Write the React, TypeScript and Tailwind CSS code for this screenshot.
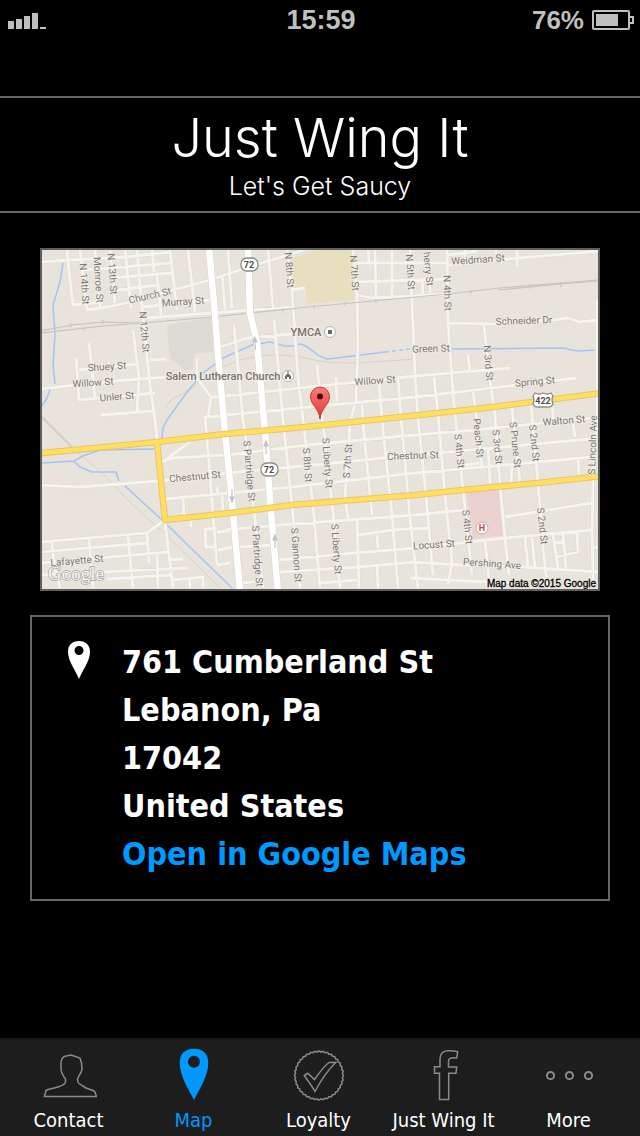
import type { ReactNode } from 'react';

type Label = [text: string, x: number, y: number, angle: number];

const ADDRESS = ['761 Cumberland St', 'Lebanon, Pa', '17042', 'United States'];

const MINOR_ROADS = [
  // north west
  'M40 262L70 260L127 257L170 252', 'M67 250L68 262L73 305L103 302', 'M87 310L107 307L130 302L173 290L210 280L245 268L265 262L305 250',
  'M80 250L87 310', 'M95 250L100 307', 'M110 250L115 303', 'M125 250L131 308', 'M137 250L142 308L150 385L155 420L157 440',
  'M152 250L154 272', 'M157 275L161 315', 'M170 250L177 310', 'M188 250L195 312', 'M83 270L173 263', 'M110 278L172 273',
  'M117 290L157 285', 'M142 307L212 300', 'M147 318L212 313L292 307', 'M222 275L225 310', 'M220 347L248 338L292 334',
  'M133 330L139 378L137 412', 'M89 343L95 398', 'M76 358L79 400L155 393', 'M79 370L137 364', 'M40 389L113 381L168 377',
  'M101 415L153 411', 'M150 360L166 359', 'M197 358L197 378L211 397L208 417', 'M211 397L222 397',
  'M220 416L205 417L210 475L213 515L217 565', 'M108 362L109 370',
  // north middle
  'M228 250L232 308', 'M268 250L273 308', 'M287 250L292 290L298 378L303 420L313 505L320 588', 'M292 290L305 288',
  'M353 250L357 295L358 345L356 400L350 423L345 498L348 518', 'M357 295L372 298L415 296L448 294', 'M368 250L369 262',
  'M375 250L376 297', 'M392 250L392 297', 'M353 263L448 263', 'M358 282L445 279', 'M410 250L412 302L415 375L418 418L426 495L433 575',
  'M234 325L243 420L245 432L263 588', 'M274 320L283 420L292 505L300 588', 'M317 365L323 425L332 502L340 588', 'M336 377L337 402',
  'M225 396L415 376L510 368', 'M225 415L415 397L576 378', 'M379 382L382 420L392 515L398 588', 'M398 378L401 418L410 518L418 588',
  'M362 405L363 423L372 515',
  // north east
  'M447 250L448 323L453 395L463 490L472 575', 'M422 278L423 294', 'M430 278L430 294', 'M448 265L520 258L598 251', 'M517 250L517 267',
  'M448 255L477 251', 'M465 250L465 260', 'M496 250L496 254', 'M448 323L493 324L553 320L567 318L580 322L598 320',
  'M484 325L491 388L495 415L500 485L505 538L509 575', 'M468 355L470 372', 'M434 377L438 415L445 495L452 562L448 585',
  'M473 392L477 420L482 467', 'M512 408L520 482', 'M531 405L538 482L543 548L547 585', 'M552 405L554 425', 'M597 300L597 420L593 478L592 532L593 582',
  'M573 422L575 437', 'M578 458L579 475',
  // between the two highways
  'M40 485L80 487L158 481L227 473L292 467L415 455L590 439', 'M162 462L190 442', 'M162 462L173 458L227 455L307 445L415 435L475 430L590 418',
  'M165 499L230 493L292 487L415 473L527 463L592 457', 'M183 498L184 515', 'M217 487L218 494', 'M222 493L223 512', 'M191 520L191 527',
  'M488 448L490 483', 'M512 465L511 483', 'M465 465L480 463',
  // south west
  'M165 520L147 533L40 542', 'M40 552L147 543', 'M40 563L168 552', 'M40 575L188 568', 'M107 579L172 575', 'M52 542L54 565L60 588',
  'M89 539L93 588', 'M128 536L133 588', 'M147 533L149 563', 'M165 522L173 588', 'M157 555L158 588', 'M168 560L183 559',
  'M173 580L203 577L203 588', 'M189 577L190 588', 'M217 528L205 529L206 547L215 547', 'M217 532L230 531', 'M218 550L230 548', 'M217 565L230 563',
  // south middle
  'M225 530L280 525L415 515L463 510', 'M225 548L275 545', 'M278 560L355 553L415 548L505 538L592 530', 'M280 572L358 567L415 562',
  'M242 583L263 581', 'M320 583L357 580', 'M357 520L359 588', 'M358 535L392 530L428 528', 'M377 535L378 548', 'M377 565L378 588',
  // south east
  'M410 562L463 565L523 567L598 572', 'M505 517L592 503', 'M525 538L528 567', 'M532 538L535 568', 'M553 535L558 568', 'M563 533L566 568',
  'M577 532L578 552L557 557', 'M553 543L563 542', 'M485 540L489 580', 'M410 578L448 580L510 583', 'M592 548L598 547',
].join('');

const TRUNK_ROADS =
  'M209 248L215 315L220 378L225 432L233 512L240 592M248 248L250 313L257 342L265 432L271 512L278 592';

const HIGHWAYS =
  'M38 453.500L157 442L225 434L305 427L415 415.500L493 407L602 393M157 442L165 520L230 513L292 505L415 495L463 490L538 483L602 476';

const WATER =
  'M63 263L60 282L53 305L55 335L53 365L55 384M50 390L47 398L42 406M300 344C312 346 314 357 328 359L385 352' +
  'M300 344L292 346L285 346L270 342L252 345L225 357L203 373L187 392L167 420L163 428L162 438' +
  'M452 349L563 348L577 351L598 350M40 463L74 461L83 456L100 450L155 449M74 461L80 467L92 472L116 472L119 481' +
  'M125 486L162 520L232 588';

const STREETS: Label[] = [
  ['N 14th St', 84, 284, 86], ['Monroe St', 98, 280, 86], ['N 13th St', 112, 274, 86], ['Church St', 150, 296, -13],
  ['Murray St', 183, 302, -4], ['N 12th St', 144, 332, 85], ['Shuey St', 107, 367, -4], ['Willow St', 93, 383, -4],
  ['Unler St', 117, 397, -5], ['N 8th St', 289, 270, 86], ['N 7th St', 354, 273, 86], ['N 5th St', 410, 272, 86],
  ['herry St', 428, 269, 84], ['N 4th St', 447, 293, 88], ['N 3rd St', 488, 363, 85], ['Weidman St', 478, 260, -4],
  ['Schneider Dr', 524, 321, -2], ['Green St', 431, 349, -2], ['Spring St', 535, 382, -5], ['Willow St', 375, 381, -4],
  ['Chestnut St', 195, 477, -5], ['Chestnut St', 413, 456, -2], ['S Partridge St', 249, 471, 85], ['S Partridge St', 257, 556, 86],
  ['S 8th St', 307, 465, 86], ['S Liberty St', 327, 463, 86], ['S 7th St', 348, 461, -86], ['S Gannon St', 296, 555, 86],
  ['S Liberty St', 336, 549, 86], ['S 4th St', 459, 451, 84], ['Peach St', 478, 438, 85], ['S 3rd St', 497, 447, 84],
  ['S Prune St', 515, 445, 84], ['S 2nd St', 534, 443, 84], ['Walton St', 564, 421, -5], ['S Lincoln Ave', 593, 445, -88],
  ['S 4th St', 467, 527, 84], ['S 2nd St', 542, 526, 84], ['Locust St', 434, 545, -4], ['Pershing Ave', 492, 564, 4],
  ['Lafayette St', 77, 561, -5],
];

// [x, y, rotation] of the one-way arrows
const ARROWS = [[255, 343, -5], [266, 447, 0], [275, 541, 0], [232, 496, 180]];

function StreetMap() {
  return (
    <svg
      viewBox="42 250 556 339"
      className="block w-full border-2 border-[#5e5e5e] bg-[#e8e4dc] font-['Roboto',sans-serif]"
      role="img"
      aria-label="Map of 761 Cumberland St"
    >
      <defs>
        <linearGradient id="pin" x1="0" y1="0" x2="0" y2="1">
          <stop offset="0" stopColor="#fb7d75" />
          <stop offset="1" stopColor="#e6352f" />
        </linearGradient>
      </defs>

      <path d="M167 325L213 317V352L195 353L192 370H185L170 358Z" fill="#dedad4" />
      <path d="M292 258L318 250H352L354 300L308 304L305 288H293Z" fill="#e8dfbf" />
      <path d="M466 492L499 488L504 536L473 539Z" fill="#ebd2cf" />

      <g fill="none">
        <path d="M107 478L133 505L163 532L220 588M73 448L107 478M225 366C250 354 280 352 310 359S370 362 415 359M166 408C170 395 180 398 192 388S212 370 225 366" stroke="#d8d2c5" strokeWidth="1" />
        <path d="M42 417L73 448" stroke="#d0cdc8" strokeWidth="2" />
        <path d={WATER} stroke="#a5c3f5" strokeWidth="1.500" />
        <path d="M385 352L410 349" stroke="#a5c3f5" strokeWidth="1.500" strokeDasharray="4 3" />
        <path d={MINOR_ROADS} stroke="#dfdbd1" strokeWidth="4" />
        <path d={MINOR_ROADS} stroke="#f6f4ef" strokeWidth="2.800" />
        <path d="M40 331L72 325L103 322L142 323L213 317L308 307L448 294L500 288L598 280" stroke="#c5c3bf" strokeWidth="1.200" />
        <path d="M40 333L103 326L142 323M498 290L560 284L598 281" stroke="#c5c3bf" strokeWidth="1.200" />
        <path d="M283 308V313M314 305V309M345 302V306M376 299V303M471 290V294M530 284V289M561 282V287M71 323V327M103 320V324M84 327V331" stroke="#c5c3bf" />
        <path d={TRUNK_ROADS} stroke="#d9d5cd" strokeWidth="7.500" />
        <path d={TRUNK_ROADS} stroke="#ffffff" strokeWidth="6.500" />
        <path d={HIGHWAYS} stroke="#e6c763" strokeWidth="6.500" strokeLinejoin="round" />
        <path d={HIGHWAYS} stroke="#ffdf63" strokeWidth="4.500" strokeLinejoin="round" />
      </g>

      {ARROWS.map(([x, y, angle]) => (
        <path key={x} d="M0 7V-2M-2 -1L0 -6L2 -1Z" transform={`translate(${x} ${y}) rotate(${angle})`} stroke="#c3c3c6" strokeWidth="1.200" fill="#c3c3c6" />
      ))}

      <g fontSize="10" textAnchor="middle" fill="#7c7871" stroke="#f1eee8" strokeWidth="1.500" paintOrder="stroke">
        {STREETS.map(([text, x, y, angle]) => (
          <text key={`${text}-${x}`} transform={`translate(${x} ${y}) rotate(${angle})`} dy="3">
            {text}
          </text>
        ))}
      </g>
      <g fontSize="11" fontWeight="500" textAnchor="middle" fill="#77726a" stroke="#f1eee8" strokeWidth="2" paintOrder="stroke">
        <text x="306" y="336">YMCA</text>
        <text x="223" y="380">Salem Lutheran Church</text>
      </g>

      <g fill="#fafafa" stroke="#b5b2ad">
        <circle cx="330" cy="332" r="5.500" />
        <circle cx="288" cy="376" r="5.500" />
        <circle cx="482" cy="528" r="6" />
      </g>
      <rect x="328" y="330" width="4" height="4" fill="#6b675f" />
      <path d="M285 379V376L288 373L291 376V379H289V377H287V379ZM287.500 371H288.500V374H287.500Z" fill="#6b675f" />
      <text x="482" y="531" fontSize="9" fontWeight="700" textAnchor="middle" fill="#d4453e">H</text>

      <g fill="#ffffff" stroke="#8a8a88" strokeWidth="1.300">
        <rect x="241" y="258" width="17" height="13" rx="6" />
        <rect x="261" y="463" width="17" height="13" rx="6" />
        <path d="M535 393Q539 395 543 393Q547 395 551 393L553 396Q551 400 553 404Q551 408 547 407H539Q535 408 533 404Q535 400 533 396Z" />
      </g>
      <g fontSize="9" fontWeight="700" textAnchor="middle" fill="#4b4b4b">
        <text x="249" y="268">72</text>
        <text x="269" y="473">72</text>
        <text x="543" y="404">422</text>
      </g>

      <path d="M320 419C319 408 310.500 405 310.500 396.500A9.500 9.500 0 0 1 329.500 396.500C329.500 405 321 408 320 419Z" fill="url(#pin)" stroke="#b8413b" />
      <circle cx="320" cy="396.500" r="3" fill="#4e0d0b" />

      <text x="76" y="580" fontSize="19" textAnchor="middle" fill="#f6f5f2" stroke="#aba8a1" strokeWidth="1.500" paintOrder="stroke" className="font-['Liberation_Serif',serif]">
        Google
      </text>
      <text x="596" y="587" fontSize="10" textAnchor="end" fill="#000000" stroke="#000000" strokeWidth="0.300" className="font-['Liberation_Sans',sans-serif]">
        Map data ©2015 Google
      </text>
    </svg>
  );
}

function StatusBar() {
  return (
    <div className="grid h-10 grid-cols-3 items-center pr-1.5 pl-2 font-['Liberation_Sans',sans-serif] font-bold text-[#bfbfbf]">
      <svg viewBox="0 0 38 16" className="mt-0.5 h-4 w-[38px]" fill="currentColor" aria-hidden="true">
        <path d="M0 8H6V16H0ZM8 6H14V16H8ZM16 3H22V16H16ZM24 0H30V16H24ZM32 14H38V16H32Z" />
      </svg>
      <span className="text-center text-[27px] leading-10">15:59</span>
      <div className="flex items-center justify-end gap-2">
        <span className="text-[26px] leading-10">76%</span>
        <svg viewBox="0 0 42 20" className="h-5 w-[42px]" fill="none" stroke="currentColor" strokeWidth="2" aria-hidden="true">
          <rect x="1" y="1" width="36" height="18" rx="1" />
          <path d="M38 7H41V13H38" />
          <rect x="4" y="4" width="22" height="12" fill="currentColor" stroke="none" />
        </svg>
      </div>
    </div>
  );
}

// Twisted edge of the loyalty seal
const SEAL = Array.from({ length: 144 }, (_, i) => {
  const a = (i / 144) * Math.PI * 2;
  const r = 24 + 0.5 * Math.cos(a * 36);
  return `${i ? 'L' : 'M'}${(28 + r * Math.cos(a)).toFixed(2)} ${(28.5 + r * Math.sin(a)).toFixed(2)}`;
}).join('') + 'Z';

const TABS: { label: string; icon: ReactNode; active?: boolean }[] = [
  {
    label: 'Contact',
    icon: <path d="M3.500 49.500L5 43.500C9 41 13 41.500 17 40C20 39 24.500 37 24.500 35V32C22 29 21.500 27 20.500 25L20 21V15C20.500 11 23 9 26 8.700L30 8L33 9L39 11L40.500 16L41 22C41 26 37 29 36.500 32C36.500 34 36.500 35.500 38 36.500L45 41C48 42.500 52 42.500 54 45L55.500 49.500Z" />,
  },
  {
    label: 'Map',
    active: true,
    icon: <path d="M28 53C23 43 13.700 29 13.700 16C13.700 7 18.500 1.700 28 1.700S42.300 7 42.300 16C42.300 29 33 43 28 53ZM28 8.700A6 6 0 1 0 28 20.700A6 6 0 1 0 28 8.700Z" fill="currentColor" fillRule="evenodd" stroke="none" />,
  },
  {
    label: 'Loyalty',
    icon: (
      <>
        <path d={SEAL} />
        <path d="M13.300 28.500L16.700 26.300L23.500 32.500C28 26 33 19 38 15.500L45 15.300C37 23 29 35 24 44.500C21 39 17 34 13.300 28.500Z" />
      </>
    ),
  },
  {
    label: 'Just Wing It',
    icon: <path d="M41.700 4.700C38 3.700 35 3.500 32 3.700C26.500 4 24 7.500 24 12V19.700H18.500V26.300H23.500V52.500H32.700V26.300H40L40.700 20H32.500V14C32.500 11 35 10.500 40.700 11Z" />,
  },
  {
    label: 'More',
    icon: (
      <g strokeWidth="2">
        <circle cx="9.500" cy="28.500" r="3.600" />
        <circle cx="28.500" cy="28.500" r="3.600" />
        <circle cx="47.500" cy="28.500" r="3.600" />
      </g>
    ),
  },
];

export default function App() {
  return (
    <div className="flex min-h-screen flex-col bg-black text-white">
      <StatusBar />

      <header className="mt-14 border-y-2 border-[#666666] pt-2 pb-2 text-center font-['Inter',sans-serif] font-light">
        <h1 className="text-[54px] leading-16">Just Wing It</h1>
        <p className="text-[25px] leading-[33px]">Let's Get Saucy</p>
      </header>

      <main className="pb-8">
        <div className="mx-10 mt-[35px]">
          <StreetMap />
        </div>

        <section className="mx-[30px] mt-6 flex border-2 border-[#666666] py-[21px] pl-9 font-['DejaVu_Sans_Condensed','DejaVu_Sans',sans-serif] text-[32px] leading-12 font-bold">
          <svg viewBox="0 0 22 40" className="mt-0.5 h-10 w-[22px] shrink-0" fill="currentColor" aria-hidden="true">
            <path fillRule="evenodd" d="M11 39C8 31 0 21 0 12C0 5 4 1 11 1S22 5 22 12C22 21 14 31 11 39ZM11 6A4.500 4.500 0 1 0 11 15A4.500 4.500 0 1 0 11 6Z" />
          </svg>
          <address className="ml-8 not-italic">
            {ADDRESS.map((line) => (
              <p key={line}>{line}</p>
            ))}
            <a href="#directions" className="block text-[#0099ff]">Open in Google Maps</a>
          </address>
        </section>
      </main>

      <nav className="mt-auto grid grid-cols-5 border-t-2 border-[#181818] bg-[#1d1d1d] pt-[7px] pr-[9px] pb-1 pl-1.5 font-['DejaVu_Sans_Condensed','DejaVu_Sans',sans-serif] text-xl leading-6">
        {TABS.map((tab) => (
          <button key={tab.label} className={`flex flex-col items-center gap-[5px] whitespace-nowrap ${tab.active ? 'text-[#0099ff]' : 'text-white'}`}>
            <svg viewBox="0 0 56 56" className={`size-14 ${tab.active ? '' : 'text-[#8a8a8a]'}`} fill="none" stroke="currentColor" strokeWidth="1.500" aria-hidden="true">
              {tab.icon}
            </svg>
            {tab.label}
          </button>
        ))}
      </nav>
    </div>
  );
}
